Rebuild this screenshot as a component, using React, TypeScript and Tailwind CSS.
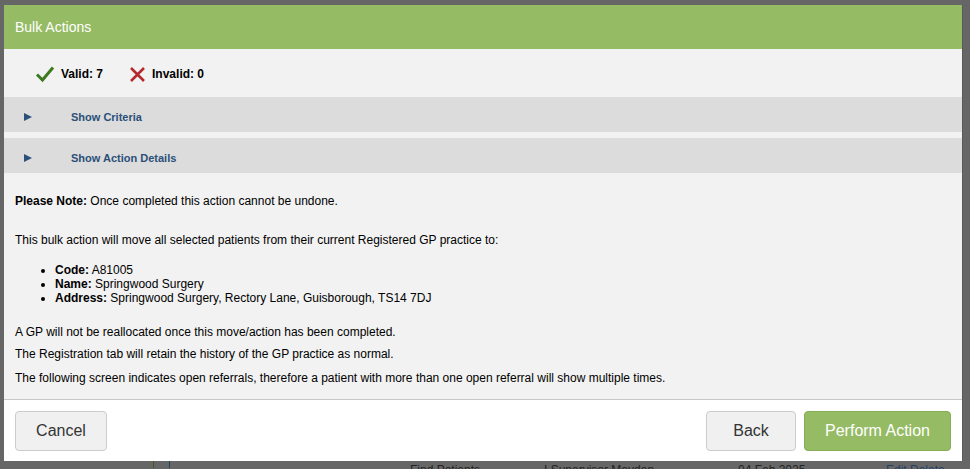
import * as React from "react";

function CheckIcon() {
  return (
    <svg width="20" height="18" viewBox="0 0 20 18" className="shrink-0">
      <path d="M2 9.5 L7.5 15 L18 2.5" fill="none" stroke="#3d7a1e" strokeWidth="3" strokeLinecap="butt" strokeLinejoin="miter" />
    </svg>
  );
}

function CrossIcon() {
  return (
    <svg width="17" height="17" viewBox="0 0 17 17" className="shrink-0">
      <path d="M2 2 L15 15 M15 2 L2 15" fill="none" stroke="#b3292c" strokeWidth="2.6" />
    </svg>
  );
}

function Toggle({ label }: { label: string }) {
  return (
    <div className="flex h-[35px] items-center bg-[#dcdcdc] pl-[19px] pt-[5px]">
      <svg width="10" height="10" viewBox="0 0 10 10" className="shrink-0">
        <path d="M1 1 L9 5 L1 9 Z" fill="#2b5079" />
      </svg>
      <span className="ml-[38px] text-[11px] font-bold text-[#2b5079]">{label}</span>
    </div>
  );
}

export default function App() {
  return (
    <div className="h-[469px] w-[970px] overflow-hidden bg-[#666666] font-['Liberation_Sans',Arial,sans-serif] text-black">
      <div className="ml-[4px] mt-[5px] w-[959px] border-r border-[#5a5a5a] bg-[#f2f2f2]">
        {/* Header */}
        <div className="flex h-[44px] items-center bg-[#95bb64] pl-[11px] text-[14px] text-white">
          Bulk Actions
        </div>

        {/* Counts */}
        <div className="flex h-[48px] items-center pl-[31px] pt-[2px] text-[12px] font-bold">
          <CheckIcon />
          <span className="ml-[6px]">Valid: 7</span>
          <span className="ml-[26px] flex items-center">
            <CrossIcon />
          </span>
          <span className="ml-[6px]">Invalid: 0</span>
        </div>

        <div className="flex flex-col gap-[6px]">
          <Toggle label="Show Criteria" />
          <Toggle label="Show Action Details" />
        </div>

        {/* Body */}
        <div className="px-[11px] pb-[14px] pt-[21px] text-[12px] leading-[14px]">
          <p>
            <b>Please Note:</b> Once completed this action cannot be undone.
          </p>
          <p className="mt-[25px]">
            This bulk action will move all selected patients from their current Registered GP practice to:
          </p>
          <ul className="mt-[16px] list-disc pl-[40px]">
            <li>
              <b>Code:</b> A81005
            </li>
            <li>
              <b>Name:</b> Springwood Surgery
            </li>
            <li>
              <b>Address:</b> Springwood Surgery, Rectory Lane, Guisborough, TS14 7DJ
            </li>
          </ul>
          <p className="mt-[20px]">A GP will not be reallocated once this move/action has been completed.</p>
          <p className="mt-[8px]">The Registration tab will retain the history of the GP practice as normal.</p>
          <p className="mt-[10px]">The following screen indicates open referrals, therefore a patient with more than one open referral will show multiple times.</p>
        </div>

        {/* Footer */}
        <div className="flex h-[62px] items-center border-t border-[#c8c8c8] bg-white px-[11px]">
          <button className="h-[40px] w-[92px] rounded-[4px] border border-[#cccccc] bg-[#f0f0f0] text-[16px] text-[#333]">
            Cancel
          </button>
          <div className="ml-auto flex gap-[8px]">
            <button className="h-[40px] w-[90px] rounded-[4px] border border-[#cccccc] bg-[#f0f0f0] text-[16px] text-[#333]">
              Back
            </button>
            <button className="h-[40px] w-[147px] rounded-[4px] border border-[#86ad55] bg-[#95bb64] text-[16px] text-white">
              Perform Action
            </button>
          </div>
        </div>
      </div>

      {/* Underlying page, dimmed */}
      <div className="flex h-[7px] items-start text-[12px] leading-[14px] text-[#222]">
        <div className="ml-[153px] h-full w-px bg-[#3a5a2a]" />
        <div className="ml-[15px] h-full w-px bg-[#1f3f55]" />
        <span className="ml-[240px] mt-[2px] w-[134px] shrink-0">Find Patients</span>
        <span className="mt-[2px] w-[194px] shrink-0">I Supervisor Mayden</span>
        <span className="mt-[2px] w-[148px] shrink-0">04 Feb 2025</span>
        <span className="mt-[2px] text-[#1f3f66]">Edit  Delete</span>
      </div>
    </div>
  );
}
